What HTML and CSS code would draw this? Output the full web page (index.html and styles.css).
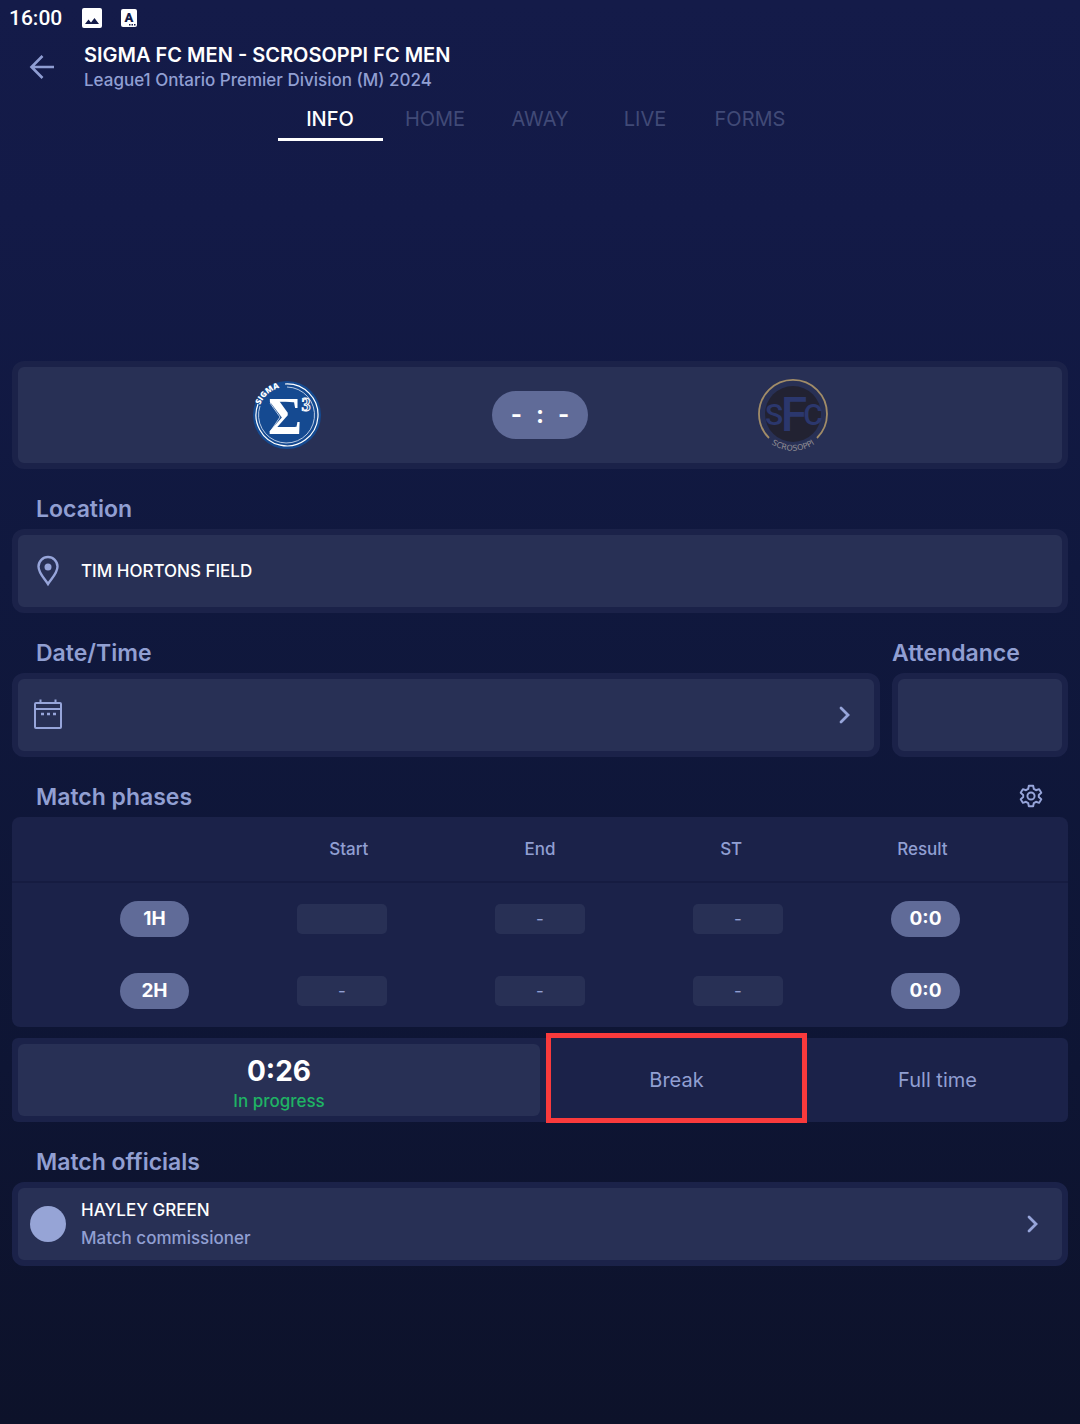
FILE: index.html
```html
<!DOCTYPE html>
<html lang="en">
<head>
<meta charset="utf-8">
<meta name="viewport" content="width=device-width, initial-scale=1">
<title>Match info</title>
<link rel="stylesheet" href="styles.css">
</head>
<body>
<div class="status-bar">
  <span class="clock">16:00</span>
  <svg class="status-icon" width="20" height="20" viewBox="0 0 20 20" aria-hidden="true"><path fill="#fff" fill-rule="evenodd" d="M2 0h16a2 2 0 0 1 2 2v16a2 2 0 0 1-2 2H2a2 2 0 0 1-2-2V2a2 2 0 0 1 2-2zm1 16h14l-4.500-6-3.500 4.500-2.500-3z"/></svg>
  <svg class="status-icon" width="16" height="18" viewBox="0 0 16 18" aria-hidden="true"><rect width="16" height="18" rx="2" fill="#fff"/><text x="8" y="13" text-anchor="middle" class="badge-letter">A</text><path fill="#141b48" d="M8 15h1.500v1.500H8zM10.500 15H12v1.500h-1.500zM13 15h1.500v1.500H13z"/></svg>
</div>

<header class="top-bar">
  <button class="icon-button" type="button" aria-label="Back">
    <svg width="26" height="24" viewBox="0 0 26 24" fill="none" stroke="#8f9dd2" stroke-width="2.600"><path d="M25 12H3M13.500 1 2.500 12l11 11"/></svg>
  </button>
  <div>
    <h1 class="title">SIGMA FC MEN - SCROSOPPI FC MEN</h1>
    <p class="subtitle">League1 Ontario Premier Division (M) 2024</p>
  </div>
</header>

<nav class="tabs">
  <a class="tab tab-active" href="#info" aria-current="page">INFO</a>
  <a class="tab" href="#home">HOME</a>
  <a class="tab" href="#away">AWAY</a>
  <a class="tab" href="#live">LIVE</a>
  <a class="tab" href="#forms">FORMS</a>
</nav>

<main class="content" id="info">
  <section class="card score-card">
    <svg class="crest" width="72" height="76" viewBox="0 0 72 76" role="img" aria-label="Sigma FC">
      <circle cx="36" cy="38" r="34" fill="#154a91"/>
      <path d="M34 7A31 31 0 1 1 7 27" fill="none" stroke="#fff" stroke-width="1.200"/>
      <path d="M36 10A28 28 0 1 1 9 29" fill="none" stroke="#e3ebf7" stroke-width=".8"/>
      <path id="sigma-arc" d="M9 28A29 29 0 0 1 38 10" fill="none"/>
      <text class="crest-sigma"><textPath href="#sigma-arc">SIGMA</textPath></text>
      <path d="m22 23-3 3 10 14-10 15 2 2" fill="none" stroke="#dfe8f5" stroke-width=".8"/>
      <text x="34" y="57" text-anchor="middle" class="crest-letter">Σ</text>
      <text x="55" y="34" text-anchor="middle" class="crest-power">3</text>
    </svg>
    <div class="score"><span>-</span><span>:</span><span>-</span></div>
    <svg class="crest" width="72" height="76" viewBox="0 0 72 76" role="img" aria-label="Scrosoppi FC">
      <circle cx="36" cy="37" r="28" fill="#222232"/>
      <path d="M12 61A34 34 0 1 1 60 61" fill="none" stroke="#a18c68" stroke-width="1.800"/>
      <g class="crest-sfc" text-anchor="middle"><text x="17" y="48" class="sfc-side">S</text><text x="37" y="54" class="sfc-mid">F</text><text x="56" y="48" class="sfc-side">C</text></g>
      <path id="scrosoppi-arc" d="M6 59A38 38 0 0 0 66 59" fill="none"/>
      <text class="crest-name" text-anchor="middle"><textPath href="#scrosoppi-arc" startOffset="50%">SCROSOPPI</textPath></text>
    </svg>
  </section>

  <section>
    <h2 class="heading">Location</h2>
    <div class="card row">
      <svg class="lead" width="36" height="36" viewBox="0 0 36 36" fill="none" stroke="#97a5da" stroke-width="2.400"><path d="M18 31C14 25 8.500 20 8.500 13.500a9.500 9.500 0 0 1 19 0C27.500 20 22 25 18 31z"/><circle cx="18" cy="14" r="3.500" fill="#97a5da" stroke="none"/></svg>
      <span class="name">TIM HORTONS FIELD</span>
    </div>
  </section>

  <div class="columns">
    <section class="date">
      <h2 class="heading">Date/Time</h2>
      <button class="card row" type="button" aria-label="Choose date and time">
        <svg class="lead" width="36" height="36" viewBox="0 0 36 36" fill="none" stroke="#97a5da" stroke-width="2"><rect x="5" y="6" width="26" height="25" rx="1"/><path d="M5 12h26M10.500 6V2.500M25.500 6V2.500"/><path d="M11 17h3M17 17h3M23 17h3" stroke-width="2.500"/></svg>
        <svg class="chevron" width="12" height="18" viewBox="0 0 12 18" fill="none" stroke="#97a5da" stroke-width="2.800" stroke-linecap="round"><path d="m3 2 7 7-7 7"/></svg>
      </button>
    </section>
    <section class="attendance">
      <h2 class="heading heading-flush"><label for="attendance">Attendance</label></h2>
      <input class="card attendance-input" id="attendance" type="text" inputmode="numeric">
    </section>
  </div>

  <section>
    <div class="heading-row">
      <h2 class="heading">Match phases</h2>
      <button class="icon-button settings" type="button" aria-label="Phase settings">
        <svg width="26" height="26" viewBox="0 0 24 24" fill="none" stroke="#97a5da" stroke-width="1.800" stroke-linejoin="round"><path d="M10 2.500h4l.6 3 2 1.150 2.900-1 2 3.450-2.300 2v1.800l2.300 2-2 3.450-2.900-1-2 1.150-.6 3h-4l-.6-3-2-1.150-2.900 1-2-3.450 2.300-2v-1.800l-2.300-2 2-3.450 2.900 1 2-1.150z"/><circle cx="12" cy="12" r="3.300"/></svg>
      </button>
    </div>
    <table class="phases">
      <thead>
        <tr><td></td><th scope="col">Start</th><th scope="col">End</th><th scope="col">ST</th><th scope="col">Result</th></tr>
      </thead>
      <tbody>
        <tr>
          <th scope="row" class="pill">1H</th>
          <td><input class="time" type="text" aria-label="1H start"></td>
          <td><input class="time" type="text" aria-label="1H end" value="-"></td>
          <td><input class="time" type="text" aria-label="1H stoppage time" value="-"></td>
          <td class="pill">0:0</td>
        </tr>
        <tr>
          <th scope="row" class="pill">2H</th>
          <td><input class="time" type="text" aria-label="2H start" value="-"></td>
          <td><input class="time" type="text" aria-label="2H end" value="-"></td>
          <td><input class="time" type="text" aria-label="2H stoppage time" value="-"></td>
          <td class="pill">0:0</td>
        </tr>
      </tbody>
    </table>
    <div class="controls">
      <div class="timer">
        <span class="timer-value">0:26</span>
        <span class="timer-state">In progress</span>
      </div>
      <button class="control control-marked" type="button">Break</button>
      <button class="control" type="button">Full time</button>
    </div>
  </section>

  <section>
    <h2 class="heading">Match officials</h2>
    <button class="card row" type="button">
      <span class="lead avatar"></span>
      <span class="person">
        <span class="name">HAYLEY GREEN</span>
        <span class="role">Match commissioner</span>
      </span>
      <svg class="chevron" width="12" height="18" viewBox="0 0 12 18" fill="none" stroke="#97a5da" stroke-width="2.800" stroke-linecap="round"><path d="m3 2 7 7-7 7"/></svg>
    </button>
  </section>
</main>
</body>
</html>
```
FILE: styles.css
```css
* { box-sizing: border-box; }

:root {
  --panel: #1b2249;
  --inset: #283055;
  --soft: #919fd2;
  --pill: #606b98;
}

body {
  margin: 0;
  min-height: 100vh;
  background: linear-gradient(#141b49 0%, #131a47 15%, #10183e 40%, #0e1534 75%, #0d122a 100%);
  color: #fff;
  font-family: Inter, "Liberation Sans", sans-serif;
  font-size: 17px;
}

h1, h2, p { margin: 0; }

button, input {
  margin: 0;
  border: 0;
  padding: 0;
  background: none;
  color: inherit;
  font: inherit;
}

.status-bar {
  display: flex;
  align-items: center;
  height: 36px;
  padding-left: 9px;
}

.clock {
  margin-right: 20px;
  font: 500 21px/36px Roboto, sans-serif;
}

.status-icon { margin-right: 19px; }
.badge-letter { font: 900 13px Roboto, sans-serif; fill: #141b48; }

.top-bar {
  display: flex;
  align-items: center;
  gap: 29px;
  height: 61px;
  padding-left: 29px;
}

.icon-button { display: flex; cursor: pointer; }
.title { font-size: 20px; font-weight: 600; line-height: 26px; }
.subtitle { color: var(--soft); font-size: 17px; font-weight: 500; line-height: 24px; }

.tabs { display: flex; justify-content: center; height: 44px; }

.tab {
  width: 105px;
  border-bottom: 3px solid transparent;
  color: #414a77;
  font-size: 20px;
  line-height: 44px;
  text-align: center;
  text-decoration: none;
}

.tab-active { border-color: #fff; color: #fff; font-weight: 500; }

.content { padding: 220px 12px 24px; }

.card {
  width: 100%;
  border: 6px solid var(--panel);
  border-radius: 12px;
  background: var(--inset);
}

.score-card {
  display: grid;
  grid-template-columns: 1fr 96px 1fr;
  align-items: center;
  height: 108px;
  padding: 0 64px;
}

.crest { justify-self: center; }

.score {
  display: flex;
  justify-content: center;
  gap: 14px;
  border-radius: 24px;
  background: var(--pill);
  font-size: 24px;
  font-weight: 700;
  line-height: 48px;
}

.crest-sigma { font: 800 8px "Open Sans", sans-serif; fill: #fff; }
.crest-letter { font: 700 52px "Liberation Serif", serif; fill: #fff; }
.crest-power { font: 700 18px "Liberation Serif", serif; fill: #154a91; stroke: #fff; stroke-width: 1px; }
.crest-sfc { fill: #2b376d; }
.sfc-side { font: 500 30px Roboto, sans-serif; }
.sfc-mid { font: 500 48px Roboto, sans-serif; }
.crest-name { font: 400 8px "DejaVu Sans", sans-serif; fill: #8f8c93; }

.heading {
  height: 60px;
  padding: 20px 0 0 24px;
  color: var(--soft);
  font-size: 23px;
  font-weight: 600;
  line-height: 40px;
}

.heading-flush { padding-left: 0; }

.row {
  display: flex;
  align-items: center;
  height: 84px;
  padding: 0 24px 0 12px;
  text-align: left;
}

.lead { flex: none; margin-right: 15px; }
.avatar { width: 36px; height: 36px; border-radius: 50%; background: #96a4d6; }
.chevron { margin-left: auto; }
.name { font-size: 17px; font-weight: 500; line-height: 28px; }
.role { color: var(--soft); font-weight: 500; line-height: 28px; }
.person { display: flex; flex-direction: column; }

.columns { display: flex; gap: 12px; }
.date { flex: 1; }
.attendance { width: 176px; }
.attendance-input { display: block; height: 84px; text-align: center; }

.heading-row {
  display: flex;
  align-items: center;
  justify-content: space-between;
  padding-right: 24px;
}

.settings { padding-top: 18px; }

.phases {
  display: block;
  border-radius: 8px;
  background: var(--panel);
}

.phases thead, .phases tbody { display: block; }

.phases thead tr {
  display: grid;
  grid-template-columns: repeat(5, 1fr);
  height: 66px;
  padding: 0 50px;
  border-bottom: 2px solid #161c41;
}

.phases thead th { color: var(--soft); font-weight: 500; line-height: 64px; padding: 0; }

.phases tbody tr {
  display: flex;
  align-items: center;
  justify-content: space-evenly;
  height: 72px;
}

.phases td { padding: 0; }

.phases .pill {
  width: 69px;
  border-radius: 18px;
  background: var(--pill);
  font-size: 19px;
  font-weight: 700;
  line-height: 36px;
  text-align: center;
  padding: 0;
}

.time {
  display: block;
  width: 90px;
  height: 30px;
  border-radius: 5px;
  background: var(--inset);
  color: var(--soft);
  text-align: center;
}

.controls {
  display: flex;
  height: 84px;
  margin-top: 11px;
  padding-left: 6px;
  border-radius: 6px;
  background: var(--panel);
}

.timer {
  display: flex;
  flex: 2;
  flex-direction: column;
  align-items: center;
  justify-content: flex-end;
  margin: 6px 6px 6px 0;
  padding-bottom: 2px;
  border-radius: 6px;
  background: var(--inset);
}

.timer-value { font-size: 28px; font-weight: 700; line-height: 34px; }
.timer-state { color: #1fb364; font-weight: 500; line-height: 26px; }
.control { flex: 1; color: var(--soft); font: 400 20px Inter, sans-serif; }
.control-marked { position: relative; }

.control-marked::after {
  content: "";
  position: absolute;
  inset: -5px 0 -1px;
  border: 5px solid #f93a3c;
}
```
